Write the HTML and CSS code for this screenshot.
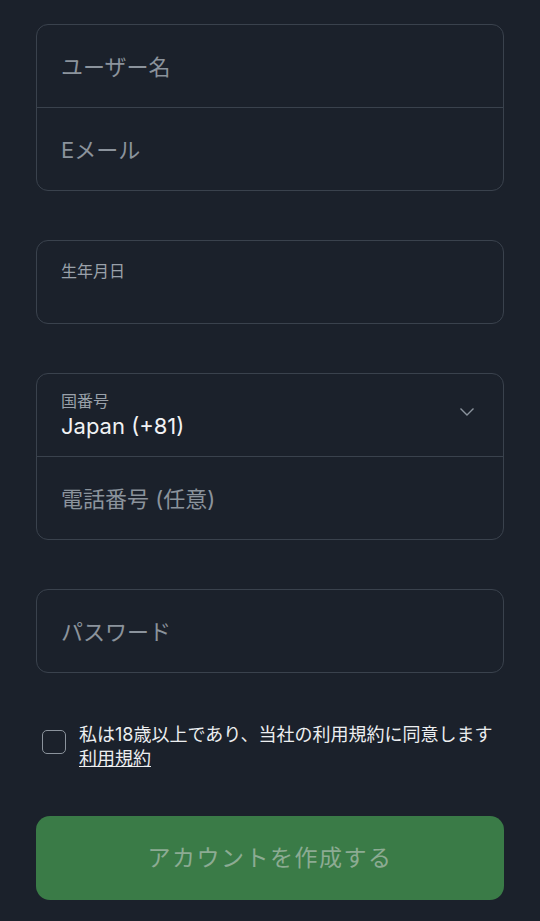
FILE: index.html
```html
<!DOCTYPE html>
<html lang="ja">

<head>
	<meta charset="UTF-8">
	<title>アカウント作成</title>
	<link rel="stylesheet" href="styles.css">
</head>

<body>
	<form class="signup">
		<div class="fieldGroup">
			<div class="field"><span class="placeholder">ユーザー名</span></div>
			<div class="field"><span class="placeholder">Eメール</span></div>
		</div>

		<div class="fieldGroup">
			<div class="field labelled">
				<span class="label">生年月日</span>
			</div>
		</div>

		<div class="fieldGroup">
			<div class="field labelled select">
				<div>
					<span class="label">国番号</span>
					<span class="value">Japan (+81)</span>
				</div>
				<svg class="chevron" width="16" height="10" viewBox="0 0 16 10">
					<path d="M1.5 1.5 L8 8 L14.5 1.5" fill="none" stroke="#8b939d" stroke-width="1.4" />
				</svg>
			</div>
			<div class="field"><span class="placeholder">電話番号 (任意)</span></div>
		</div>

		<div class="fieldGroup">
			<div class="field"><span class="placeholder">パスワード</span></div>
		</div>

		<label class="agree">
			<span class="checkbox"></span>
			<span class="agreeText">私は18歳以上であり、当社の利用規約に同意します<br><a href="#">利用規約</a></span>
		</label>

		<button type="button" class="submit">アカウントを作成する</button>
	</form>
</body>

</html>
```

FILE: styles.css
```css
body {
    font-family: Inter, "Noto Sans CJK JP", sans-serif;
    background-color: #1b212b;
    color: #e4e7ea;
    margin: 0;
    padding: 24px 36px 0;
}
.signup {
    display: flex;
    flex-direction: column;
}
.fieldGroup {
    border: 1px solid #3a424d;
    border-radius: 12px;
    margin-bottom: 49px;
}
.field {
    height: 82px;
    display: flex;
    align-items: center;
    padding: 0 24px 3px;
    box-sizing: border-box;
}
.field + .field {
    border-top: 1px solid #3a424d;
    height: 83px;
}
.placeholder {
    font-size: 22px;
    color: #8b939c;
}
.labelled {
    align-items: flex-start;
    padding-top: 17px;
}
.label {
    display: block;
    font-size: 16px;
    color: #9aa1aa;
}
.select {
    justify-content: space-between;
    align-items: center;
    padding-top: 0;
}
.value {
    display: block;
    font-size: 22px;
    color: #f1f2f4;
    margin-top: 1px;
}
.chevron {
    margin-right: 4px;
    margin-top: -4px;
}
.agree {
    display: flex;
    align-items: flex-start;
    gap: 13px;
    margin: 5px 0 0 6px;
}
.checkbox {
    width: 22px;
    height: 22px;
    border: 1.5px solid #8b939c;
    border-radius: 5px;
    margin-top: 3px;
    flex-shrink: 0;
}
.agreeText {
    font-size: 18px;
    line-height: 24px;
    color: #eceef0;
    margin-top: -4px;
}
.agreeText a {
    color: #eceef0;
}
.submit {
    margin-top: 45px;
    height: 84px;
    padding-bottom: 6px;
    border: none;
    border-radius: 14px;
    background-color: #3a7b47;
    color: #8cab93;
    font-family: inherit;
    font-size: 23px;
    letter-spacing: 1.5px;
}
```
